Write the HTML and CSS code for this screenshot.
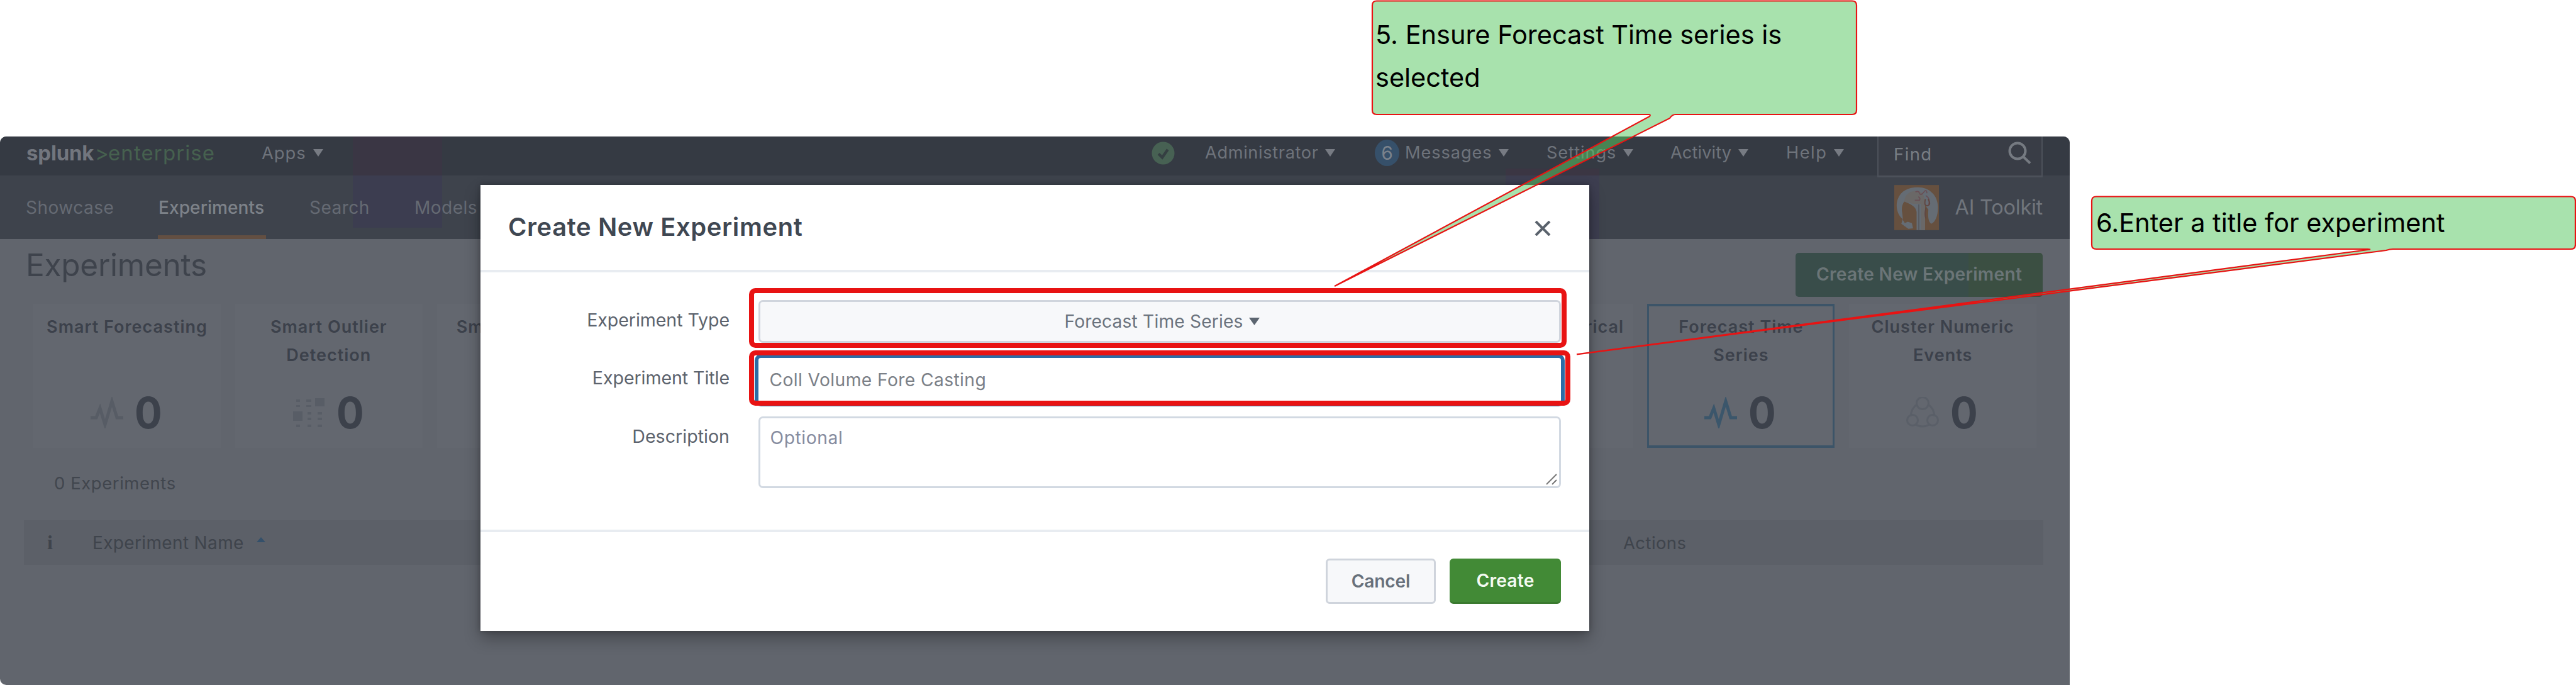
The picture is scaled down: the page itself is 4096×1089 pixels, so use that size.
FILE: index.html
```html
<!DOCTYPE html>
<html lang="en">
<head>
<meta charset="utf-8">
<title>Create New Experiment</title>
<link rel="stylesheet" href="styles.css">
</head>
<body>
<div class="stage">
  <div class="app">
    <header class="topbar">
      <div class="logo"><span class="logo-name">splunk</span><span class="logo-edition"><i>&gt;</i>enterprise</span></div>
      <div class="menu menu-apps">Apps<svg class="caret" viewBox="0 0 16 12"><path d="M0 0h16L8 12z"/></svg></div>
      <div class="status"><svg viewBox="0 0 38 38"><circle cx="19" cy="19" r="18.5" fill="#476153"/><path d="M11.5 20l6 6 9-13" fill="none" stroke="#353f42" stroke-width="4.5"/></svg></div>
      <div class="menu menu-admin">Administrator<svg class="caret" viewBox="0 0 16 12"><path d="M0 0h16L8 12z"/></svg></div>
      <div class="menu menu-messages"><span class="badge">6</span>Messages<svg class="caret" viewBox="0 0 16 12"><path d="M0 0h16L8 12z"/></svg></div>
      <div class="menu menu-settings">Settings<svg class="caret" viewBox="0 0 16 12"><path d="M0 0h16L8 12z"/></svg></div>
      <div class="menu menu-activity">Activity<svg class="caret" viewBox="0 0 16 12"><path d="M0 0h16L8 12z"/></svg></div>
      <div class="menu menu-help">Help<svg class="caret" viewBox="0 0 16 12"><path d="M0 0h16L8 12z"/></svg></div>
      <div class="find"><span>Find</span><svg viewBox="0 0 38 36"><circle cx="16" cy="15" r="12.5"/><path d="M25 24l11 10.500"/></svg></div>
    </header>
    <nav class="nav">
      <a class="nav-item nav-showcase">Showcase</a>
      <a class="nav-item nav-experiments">Experiments</a>
      <a class="nav-item nav-search">Search</a>
      <a class="nav-item nav-models">Models</a>
      <div class="brand">
        <svg viewBox="0 0 380 384">
          <rect width="380" height="384" fill="#66503f"/>
          <path d="M160 368L120 372 60 330 72 290C20 250 10 170 30 120 55 50 120 20 200 20 300 20 372 90 372 190 372 260 350 315 315 330 290 315 285 270 290 210L262 170 262 384H190V230C185 195 165 180 130 160L85 140C65 170 60 200 68 240L75 300 90 325 115 312 150 325z" fill="#656c74"/>
          <path d="M85 140C90 80 130 50 200 50 250 60 262 110 262 170V384H228V160L160 160z" fill="#6a6867"/>
          <path d="M209 165V384" stroke="#55575c" stroke-width="9" fill="none"/>
          <path d="M180 60q25-15 35 10t35-8 28 8M268 90q40 20 25 75M175 130h40q10-20-10-30" stroke="#694f56" stroke-width="9" fill="none"/>
          <path d="M265 120q-15 60 18 55t5-55M270 195q-15 60 0 90" stroke="#604742" stroke-width="10" fill="none"/>
        </svg>
        <span>AI Toolkit</span>
      </div>
    </nav>
    <main class="content">
      <div class="heading">
        <h1>Experiments</h1>
        <div class="new-button">Create New Experiment</div>
      </div>
      <div class="cards">
        <div class="card">
          <div class="card-title">Smart Forecasting</div>
          <div class="count"><svg viewBox="0 0 52 50"><path d="M0 33h9l6-15 8 26L34 7l8 26h10"/></svg><b>0</b></div>
        </div>
        <div class="card">
          <div class="card-title">Smart Outlier<br>Detection</div>
          <div class="count dots"><svg viewBox="0 0 52 50"><path d="M6 4h6v4H6zM6 13h6v3H6zM22 4h8v4h-8zM22 13h8v3h-8zM36 2h15v13H36zM1 23h15v15H1zM24 24h6v4h-6zM24 33h6v4h-6zM40 24h7v4h-7zM40 33h7v4h-7zM6 44h6v4H6zM24 44h6v4h-6zM40 44h7v4h-7z"/></svg><b>0</b></div>
        </div>
        <div class="card"><div class="card-title">Smart Clustering</div></div>
        <div class="card"></div>
        <div class="card"></div>
        <div class="card"></div>
        <div class="card"></div>
        <div class="card"><div class="card-title">Predict Categorical</div></div>
        <div class="card selected">
          <div class="card-title">Forecast Time<br>Series</div>
          <div class="count"><svg viewBox="0 0 52 50"><path d="M0 33h9l6-15 8 26L34 7l8 26h10"/></svg><b>0</b></div>
        </div>
        <div class="card">
          <div class="card-title">Cluster Numeric<br>Events</div>
          <div class="count cluster"><svg viewBox="0 0 52 50"><circle cx="26" cy="10" r="9.500"/><path d="M17 12Q8 18 7 31M35 12q9 6 10 19M15 44q11 6 22 0"/><circle cx="10" cy="37" r="8.500"/><circle cx="42" cy="37" r="8.500"/></svg><b>0</b></div>
        </div>
      </div>
      <div class="total">0 Experiments</div>
      <div class="table-head">
        <div class="col-info">i</div>
        <div class="col-name">Experiment Name<svg viewBox="0 0 14 8"><path d="M0 8L7 0l7 8z"/></svg></div>
        <div class="col-actions">Actions</div>
      </div>
    </main>
  </div>

  <section class="modal">
    <div class="modal-head">
      <h2>Create New Experiment</h2>
      <svg viewBox="0 0 26 24"><path d="M2 1l22 22M24 1L2 23"/></svg>
    </div>
    <div class="form">
      <label class="label-type">Experiment Type</label>
      <div class="select">Forecast Time Series<svg viewBox="0 0 17 12"><path d="M0 0h17L8.500 12z"/></svg></div>
      <label class="label-title">Experiment Title</label>
      <div class="input">Coll Volume Fore Casting</div>
      <label class="label-desc">Description</label>
      <div class="textarea"><span>Optional</span><svg viewBox="0 0 18 18"><path d="M1 17L17 1M10 17l7-7"/></svg></div>
    </div>
    <div class="modal-foot">
      <div class="button cancel">Cancel</div>
      <div class="button create">Create</div>
    </div>
  </section>

  <div class="mark mark-type"></div>
  <div class="mark mark-title"></div>

  <svg class="callouts" viewBox="0 0 4096 1089">
    <path d="M2189 1.500H2945Q2952 1.500 2952 8.500V175Q2952 182 2945 182H2664Q2659 182 2655 188L2122 455 2623 185Q2625 182 2622 182H2189Q2182 182 2182 175V8.500Q2182 1.500 2189 1.500Z"/>
    <path d="M3333 312.500H4088Q4095 312.500 4095 319.500V389Q4095 396 4088 396H3805Q3800 396 3794 398L2507 563.300 3769 396.500 3765 396H3333Q3326 396 3326 389V319.500Q3326 312.500 3333 312.500Z"/>
  </svg>
  <div class="note note-type">5. Ensure Forecast Time series is<br>selected</div>
  <div class="note note-title">6.Enter a title for experiment</div>
</div>
</body>
</html>
```
FILE: styles.css
```css
* { box-sizing: border-box; }
body { margin: 0; background: #fff; font-family: Inter, "Liberation Sans", sans-serif; }
h1, h2 { margin: 0; }
svg { display: block; flex: none; }
.stage { position: relative; width: 4096px; height: 1089px; padding-top: 217px; overflow: hidden; }

.app { width: 3291px; height: 872px; overflow: hidden; border-radius: 10px 10px 0 10px; background: #61656d; }

/* Top bar */
.topbar {
  display: flex; align-items: center; height: 62px; padding: 0 43px 10px 42px; color: #6e737b;
  background: linear-gradient(#3a3644, #3a3644) 561px 0 / 142px 62px no-repeat,
    linear-gradient(#3b3643, #3b3643) 2394px 51px / 149px 11px no-repeat, #353a43;
}
.logo { display: flex; width: 374px; font-size: 33px; line-height: 40px; }
.logo-name { width: 109px; font-weight: 700; letter-spacing: -.2px; color: #72767e; }
.logo-edition { color: #46614f; letter-spacing: 1.1px; }
.logo-edition i { display: inline-block; width: 21px; font-style: normal; letter-spacing: 0; }
.menu { display: flex; align-items: center; flex: none; font-size: 27.2px; line-height: 36px; letter-spacing: .9px; }
.caret { width: 16px; height: 12px; margin: 0 0 1px 11px; fill: #777b83; }
.menu-apps { width: 1415px; font-size: 27.4px; letter-spacing: .9px; }
.status { width: 85px; }
.status svg { width: 37px; height: 37px; }
.menu-admin { width: 270px; letter-spacing: .64px; }
.menu-admin .caret { margin-left: 10px; }
.menu-messages { width: 273px; }
.badge { width: 39px; height: 42px; margin-right: 9px; border-radius: 50%; background: #36506a; color: #7a828c; font-size: 30px; line-height: 42px; text-align: center; letter-spacing: 0; }
.menu-settings { width: 197px; }
.menu-activity { width: 184px; letter-spacing: .1px; }
.menu-help { width: 145px; letter-spacing: 1.5px; }
.find { display: flex; align-items: flex-end; justify-content: space-between; align-self: stretch; flex: 1; height: 65px; padding: 0 16px 18px 24px; border: solid #4c515a; border-width: 0 2px 3px; background: #393d46; color: #787d84; font-size: 27.5px; line-height: 36px; letter-spacing: 1.4px; }
.find span { margin-bottom: -2px; }
.find svg { width: 38px; height: 36px; fill: none; stroke: #757a81; stroke-width: 4; }

/* App navigation */
.nav {
  display: flex; align-items: center; height: 101px; padding: 0 43px 0 41px; color: #656a73; font-size: 28.1px; line-height: 36px; letter-spacing: .45px;
  background: linear-gradient(#3c3d50, #3c3d50) 561px 0 / 142px 83px no-repeat,
    linear-gradient(#3d3e50, #3d3e50) 2394px 0 / 149px 101px no-repeat, #3e434c;
}
.nav-item { flex: none; }
.nav-showcase { width: 211px; }
.nav-experiments { position: relative; width: 240px; color: #7d8289; font-weight: 500; letter-spacing: .05px; }
.nav-experiments::after { content: ""; position: absolute; left: -1px; top: 62px; width: 172px; height: 6px; background: #634f42; }
.nav-search { width: 167px; }
.brand { display: flex; align-items: center; gap: 26px; margin-left: auto; color: #70757c; font-size: 32.5px; letter-spacing: -.25px; line-height: 40px; }
.brand svg { width: 71px; height: 72px; }

/* Page content */
.heading { display: flex; justify-content: space-between; align-items: flex-start; height: 103px; padding: 22px 43px 0 41px; }
.heading h1 { margin-top: -11px; color: #3e434c; font-size: 49.5px; line-height: 60px; font-weight: 400; letter-spacing: -.25px; }
.new-button { width: 393px; height: 70px; border-radius: 5px; background: linear-gradient(90deg, #394d4a 70%, #3b4f42 70%); color: #6b7577; text-align: center; font-size: 28.2px; line-height: 69px; font-weight: 600; letter-spacing: .26px; }
.cards { display: grid; grid-template-columns: repeat(10, 298px); gap: 22.8px; padding-left: 53px; }
.card { display: flex; flex-direction: column; justify-content: space-between; height: 229px; padding: 15px 0 30px; background: #63676f; overflow: hidden; color: #3c414b; }
.card-title { text-align: center; font-size: 27px; line-height: 44.600px; font-weight: 600; letter-spacing: 1px; white-space: nowrap; }
.selected { border: 4px solid #3c5468; border-width: 4px 3px; padding: 11px 0 26px; }
.count { display: flex; justify-content: center; align-items: center; gap: 18px; height: 52px; }
.count svg { width: 52px; height: 50px; fill: none; stroke: #575c65; stroke-width: 5; }
.selected .count svg { stroke: #3b566b; }
.count b { font-size: 69px; line-height: 52px; font-weight: 700; transform: scaleX(.94); transform-origin: left; }
.count.dots svg { fill: #585d66; stroke: none; }
.count.cluster svg { stroke: #5a5f68; stroke-width: 3; }
.total { margin-top: 38px; padding-left: 86px; color: #41464e; font-size: 27.5px; line-height: 36px; letter-spacing: .55px; }
.table-head { display: flex; align-items: center; width: 3211px; height: 71px; margin: 41px 0 0 38px; background: #5c6068; color: #3f444c; font-size: 28px; line-height: 36px; }
.col-info { width: 109px; padding-left: 37px; font: bold 32px "Liberation Serif", serif; }
.col-name { display: flex; align-items: center; width: 2415px; letter-spacing: .35px; }
.col-name svg { width: 14px; height: 8px; margin: 0 0 10px 20px; fill: #34506a; }
.col-actions { flex: 1; padding-left: 19px; font-size: 27.5px; letter-spacing: .4px; }

/* Dialog */
.modal { position: absolute; left: 764px; top: 294px; width: 1763px; height: 709px; background: #fff; box-shadow: 0 12px 24px rgba(0, 0, 0, .3), 0 0 8px rgba(0, 0, 0, .25); }
.modal-head { display: flex; justify-content: space-between; align-items: center; height: 139px; padding: 0 61px 2px 44px; border-bottom: 4px solid #e8ecf1; }
.modal-head h2 { color: #3f4752; font-size: 39.9px; line-height: 48px; font-weight: 600; letter-spacing: .62px; }
.modal-head svg { width: 26px; height: 24px; margin-top: 5px; fill: none; stroke: #5a626c; stroke-width: 4; }
.form { display: grid; grid-template-columns: 396px 1276px; grid-template-rows: 86px 99px 114px; column-gap: 45.500px; height: 413px; padding-top: 44px; border-bottom: 4px solid #e8ecf1; color: #5c636d; }
.form label { text-align: right; font-size: 28.6px; line-height: 36px; }
.label-type, .label-title { letter-spacing: -.08px; }
.label-type { padding-top: 14px; }
.label-title { padding-top: 20px; }
.label-desc { padding-top: 14px; }
.select { display: flex; justify-content: center; align-items: center; height: 68px; padding-left: 8px; border: 3px solid #d0d5dd; border-radius: 7px; background: #f7f8fa; color: #6a727d; font-size: 28.2px; letter-spacing: .15px; }
.select svg { width: 17px; height: 12px; margin-left: 9px; fill: #5c6570; }
.input { height: 83px; margin: 0 -6px; padding: 13px 18px; border: 6px solid #2b6ca5; border-radius: 10px; color: #7b8087; font-size: 28.2px; line-height: 45px; letter-spacing: .41px; }
.textarea { display: flex; justify-content: space-between; height: 114px; padding: 13px 3px 2px 16px; border: 3px solid #d2d9e2; border-radius: 7px; color: #868ca0; font-size: 28.2px; line-height: 36px; letter-spacing: .6px; }
.textarea svg { align-self: flex-end; width: 18px; height: 18px; fill: none; stroke: #777; stroke-width: 2; }
.modal-foot { display: flex; justify-content: flex-end; gap: 22px; padding: 42px 45px 0; }
.button { height: 72px; border-radius: 6px; font-size: 28.2px; font-weight: 600; text-align: center; }
.cancel { width: 175px; border: 3px solid #cfd4dc; background: #f7f8fa; color: #67707b; line-height: 66px; letter-spacing: -.2px; }
.create { width: 177px; border-bottom: 3px solid #3a7a2f; background: #428a36; color: #f4faf3; line-height: 71px; letter-spacing: .2px; }

/* Annotations over the screen */
.mark { position: absolute; border: 8.400px solid #e81313; border-radius: 10px; }
.mark-type { left: 1191px; top: 458px; width: 1300px; height: 95px; }
.mark-title { left: 1191px; top: 556.500px; width: 1306px; height: 88.500px; }
.callouts { position: absolute; left: 0; top: 0; width: 4096px; height: 1089px; fill: rgba(89, 200, 99, .525); stroke: #e81313; stroke-width: 2.200; }
.note { position: absolute; color: #000; font-size: 41.500px; line-height: 68.500px; letter-spacing: -.03px; white-space: nowrap; }
.note-type { left: 2187px; top: 20.500px; }
.note-title { left: 3333px; top: 319.500px; }
```
